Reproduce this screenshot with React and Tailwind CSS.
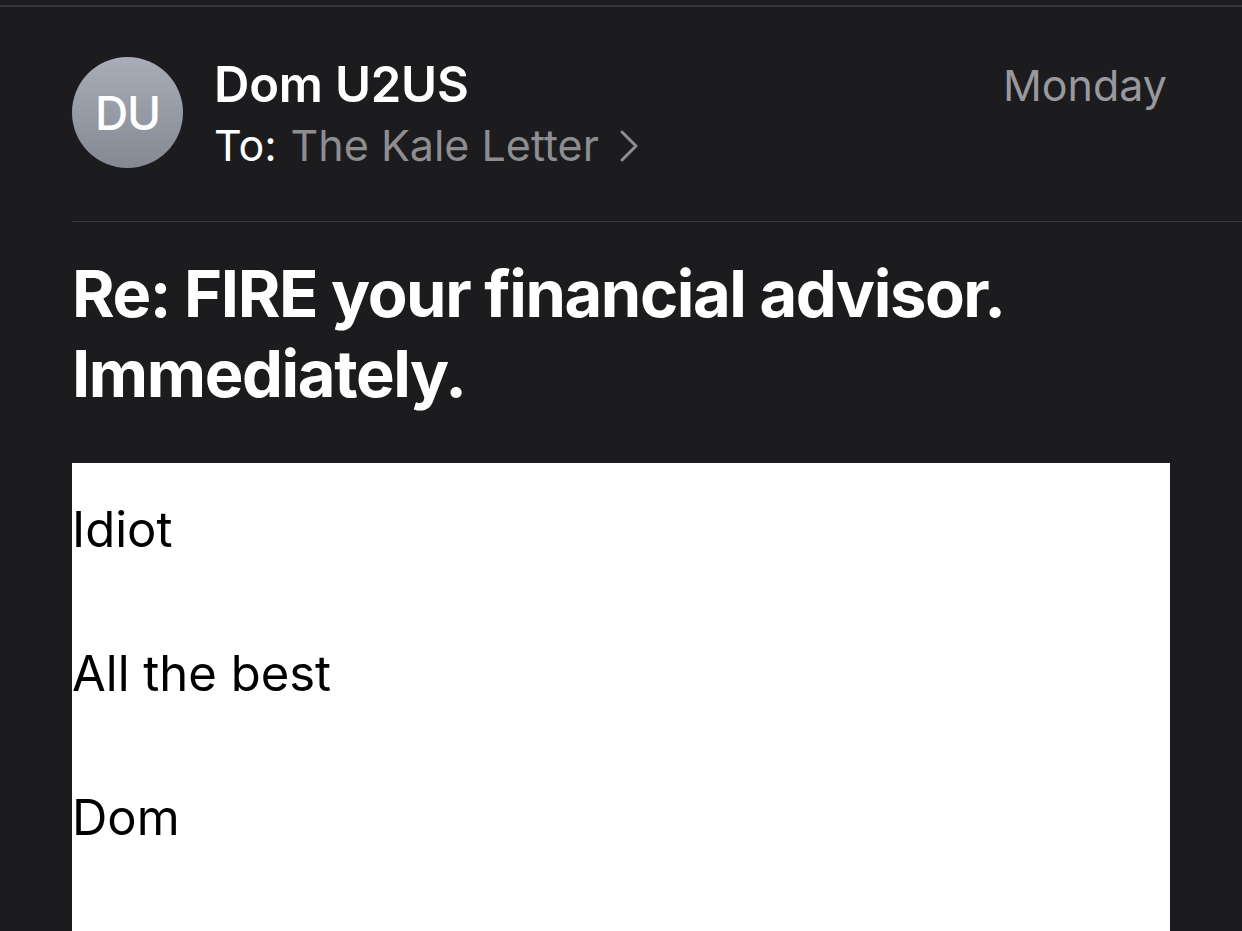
export default function App() {
  const font = { fontFamily: 'Inter, "Noto Sans", sans-serif' };
  return (
    <div className="w-[1242px] h-[931px] overflow-hidden bg-[#1c1c1e] pt-[5px]" style={font}>
      <div className="h-[2px] bg-[#38383a]" />
      <div className="pl-[72px]">
        <div className="flex items-start pr-[74px] pt-[48px]">
          <div className="mt-[2px] w-[111px] h-[111px] shrink-0 rounded-full bg-gradient-to-b from-[#a9adb8] to-[#858993] flex items-center justify-center">
            <span className="text-white text-[46px] font-medium tracking-[-1px] leading-none">DU</span>
          </div>
          <div className="ml-[31px] flex-1 flex flex-col">
            <div className="text-white text-[49px] font-semibold leading-[60px] tracking-[-0.2px]">Dom U2US</div>
            <div className="flex items-center leading-[60px] text-[43px]">
              <span className="text-white">To:</span>
              <span className="ml-[14px] text-[#8d8d92]">The Kale Letter</span>
              <svg className="ml-[20px] mt-[2px]" width="20" height="34" viewBox="0 0 20 34">
                <polyline points="3,3 17,17 3,31" fill="none" stroke="#8d8d92" strokeWidth="3" strokeLinecap="round" strokeLinejoin="round" />
              </svg>
            </div>
          </div>
          <div className="text-[#98989e] text-[43px] leading-[60px] mr-[1px]">Monday</div>
        </div>
        <div className="mt-[46px] h-[1px] bg-[#3a3a3c]" />
        <h1 className="mt-[32px] text-white text-[65px] font-bold leading-[80px] tracking-[-1.4px]">
          Re: FIRE your financial advisor.<br />Immediately.
        </h1>
        <div className="mt-[49px] w-[1098px] h-[600px] bg-white pt-[31px] text-black text-[49px] leading-[72px]">
          <p className="mb-[72px]">Idiot</p>
          <p className="mb-[72px]">All the best</p>
          <p className="mb-[72px]">Dom</p>
        </div>
      </div>
    </div>
  );
}
